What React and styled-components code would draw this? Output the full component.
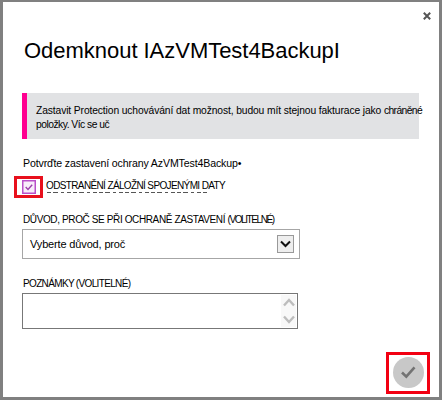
import React from "react";
import styled, { createGlobalStyle } from "styled-components";

const GlobalStyle = createGlobalStyle`
  *, *::before, *::after { box-sizing: border-box; }
  body { margin: 0; background: #808080; font-family: "Liberation Sans", Arial, sans-serif; }
  svg { display: block; }
`;

const Dialog = styled.main`
  display: flex;
  flex-direction: column;
  width: 442px;
  height: 400px;
  padding: 0 9px 3px 11px;
  overflow: hidden;
  background: #fff;
  border: solid #808080;
  border-width: 2px 3px 3px 3px;
  color: #000;
`;

const TopBar = styled.header`
  display: flex;
  justify-content: flex-end;
  height: 35px;
  padding-top: 10px;
`;

const CloseButton = styled.button`
  width: 8px;
  height: 8px;
  margin-right: -1px;
  padding: 0;
  border: 0;
  background: none;
`;

const Title = styled.h1`
  height: 28px;
  margin: 0 0 28px 10px;
  font-size: 22px;
  font-weight: 400;
  line-height: 28px;
  letter-spacing: -0.03px;
  white-space: nowrap;
`;

const Notice = styled.section`
  width: 397px;
  height: 46px;
  margin-left: 8px;
  padding: 11px 0 0 9px;
  border-left: 5px solid #ff0090;
  background: #e1e2e4;
`;

const Line = styled.div`
  height: ${({ $h }) => $h || 14}px;
  font-size: ${({ $size }) => $size || 11}px;
  line-height: ${({ $h }) => $h || 14}px;
  letter-spacing: ${({ $ls }) => $ls || 0}px;
  white-space: nowrap;
`;

const Tight = styled.span`
  letter-spacing: ${({ $ls }) => $ls}px;
`;

const Form = styled.form`
  display: flex;
  flex-direction: column;
  padding: 17px 0 0 9px;
`;

const OptionRow = styled.label`
  display: flex;
  align-items: flex-start;
  height: 23px;
  margin: 6px 0 14px -9px;
`;

const CheckHighlight = styled.span`
  display: flex;
  align-items: center;
  justify-content: center;
  width: 29px;
  height: 22px;
  border: 3px solid #e8101c;
`;

const OptionText = styled.span`
  display: block;
  margin: 3px 0 0 3px;
`;

const Select = styled.div`
  display: flex;
  align-items: center;
  justify-content: space-between;
  width: 278px;
  height: 30px;
  margin: 2px 0 18px -1px;
  padding: 0 5px 0 7px;
  border: 1px solid #a6a6a6;
`;

const DropButton = styled.span`
  display: grid;
  place-items: center;
  width: 17px;
  height: 18px;
  border: 1px solid #999;
  background: #eee;
`;

const Notes = styled.div`
  display: flex;
  justify-content: flex-end;
  width: 276px;
  height: 36px;
  margin: 2px 0 0 -1px;
  padding: 1px;
  border: 1px solid #777;
`;

const ScrollTrack = styled.div`
  display: flex;
  flex-direction: column;
  align-items: center;
  justify-content: space-between;
  width: 15px;
  padding: 3px 0;
  background: #f8f8f8;
`;

const Footer = styled.footer`
  display: flex;
  justify-content: flex-end;
  margin-top: auto;
`;

const ConfirmHighlight = styled.div`
  display: grid;
  place-items: center;
  width: 44px;
  height: 42px;
  border: 3px solid #f20012;
`;

const ConfirmButton = styled.button`
  display: grid;
  place-items: center;
  width: 31px;
  height: 31px;
  padding: 0;
  border: 0;
  border-radius: 50%;
  background: #c8c8c8;
  transform: translateY(-1px);
`;

const Arrow = ({ up }) => (
  <svg width="12" height="9" viewBox="0 0 12 9" fill="none" stroke="#bdbdbd" strokeWidth="2.4">
    <path d={up ? "M1 7.5 6 2 11 7.5" : "M1 1.5 6 7 11 1.5"} />
  </svg>
);

export default function App() {
  return (
    <>
      <GlobalStyle />
      <Dialog>
        <TopBar>
          <CloseButton type="button" aria-label="Zavřít">
            <svg width="8" height="8" viewBox="0 0 8 8" stroke="#555" strokeWidth="2">
              <path d="M.8 .8 7.2 7.2M7.2 .8 .8 7.2" />
            </svg>
          </CloseButton>
        </TopBar>
        <Title>Odemknout IAzVMTest4BackupI</Title>
        <Notice>
          <Line $size={10.3} $ls={-0.12}>
            Zastavit Protection uchovávání dat možnost, budou mít stejnou fakturace jako{" "}
            <Tight $ls={-0.6}>chráněné</Tight>
          </Line>
          <Line $size={10.3} $ls={-0.5}>položky. Víc se uč</Line>
        </Notice>
        <Form>
          <Line $size={10.6} $ls={-0.13}>Potvrďte zastavení ochrany AzVMTest4Backup•</Line>
          <OptionRow>
            <CheckHighlight>
              <svg width="14" height="14" viewBox="0 0 14 14" fill="none">
                <rect x=".75" y=".75" width="12.5" height="12.5" fill="#f8edfa" stroke="#b94fc9" strokeWidth="1.5" />
                <path d="M3.7 7.1 6 9.4 10.2 4.7" stroke="#9b3eaa" strokeWidth="1.4" />
              </svg>
            </CheckHighlight>
            <OptionText>
              <Line $h={13} $size={10} $ls={-0.63}>ODSTRANĚNÍ ZÁLOŽNÍ SPOJENÝMI DATY</Line>
              <svg width="162" height="1" viewBox="0 0 162 1" stroke="#555">
                <path d="M1 .5H162" strokeDasharray="4 2 5 3 3 3 4 2" />
              </svg>
            </OptionText>
          </OptionRow>
          <Line $size={10} $ls={-0.38}>
            DŮVOD, PROČ SE PŘI OCHRANĚ ZASTAVENÍ <Tight $ls={-1.4}>(VOLITELNÉ)</Tight>
          </Line>
          <Select>
            <Line $ls={-0.15}>Vyberte důvod, proč</Line>
            <DropButton>
              <svg width="11" height="8" viewBox="0 0 11 8" fill="none" stroke="#111" strokeWidth="2">
                <path d="M1 1.5 5.5 6 10 1.5" />
              </svg>
            </DropButton>
          </Select>
          <Line $size={10} $ls={-0.65}>POZNÁMKY (VOLITELNÉ)</Line>
          <Notes role="textbox" aria-label="Poznámky">
            <ScrollTrack><Arrow up /><Arrow /></ScrollTrack>
          </Notes>
        </Form>
        <Footer>
          <ConfirmHighlight>
            <ConfirmButton type="button" aria-label="Potvrdit">
              <svg width="15" height="13" viewBox="0 0 15 13" fill="none" stroke="#737373" strokeWidth="2.6">
                <path d="M1 6.5 5.3 10.7 13.5 1.3" />
              </svg>
            </ConfirmButton>
          </ConfirmHighlight>
        </Footer>
      </Dialog>
    </>
  );
}
